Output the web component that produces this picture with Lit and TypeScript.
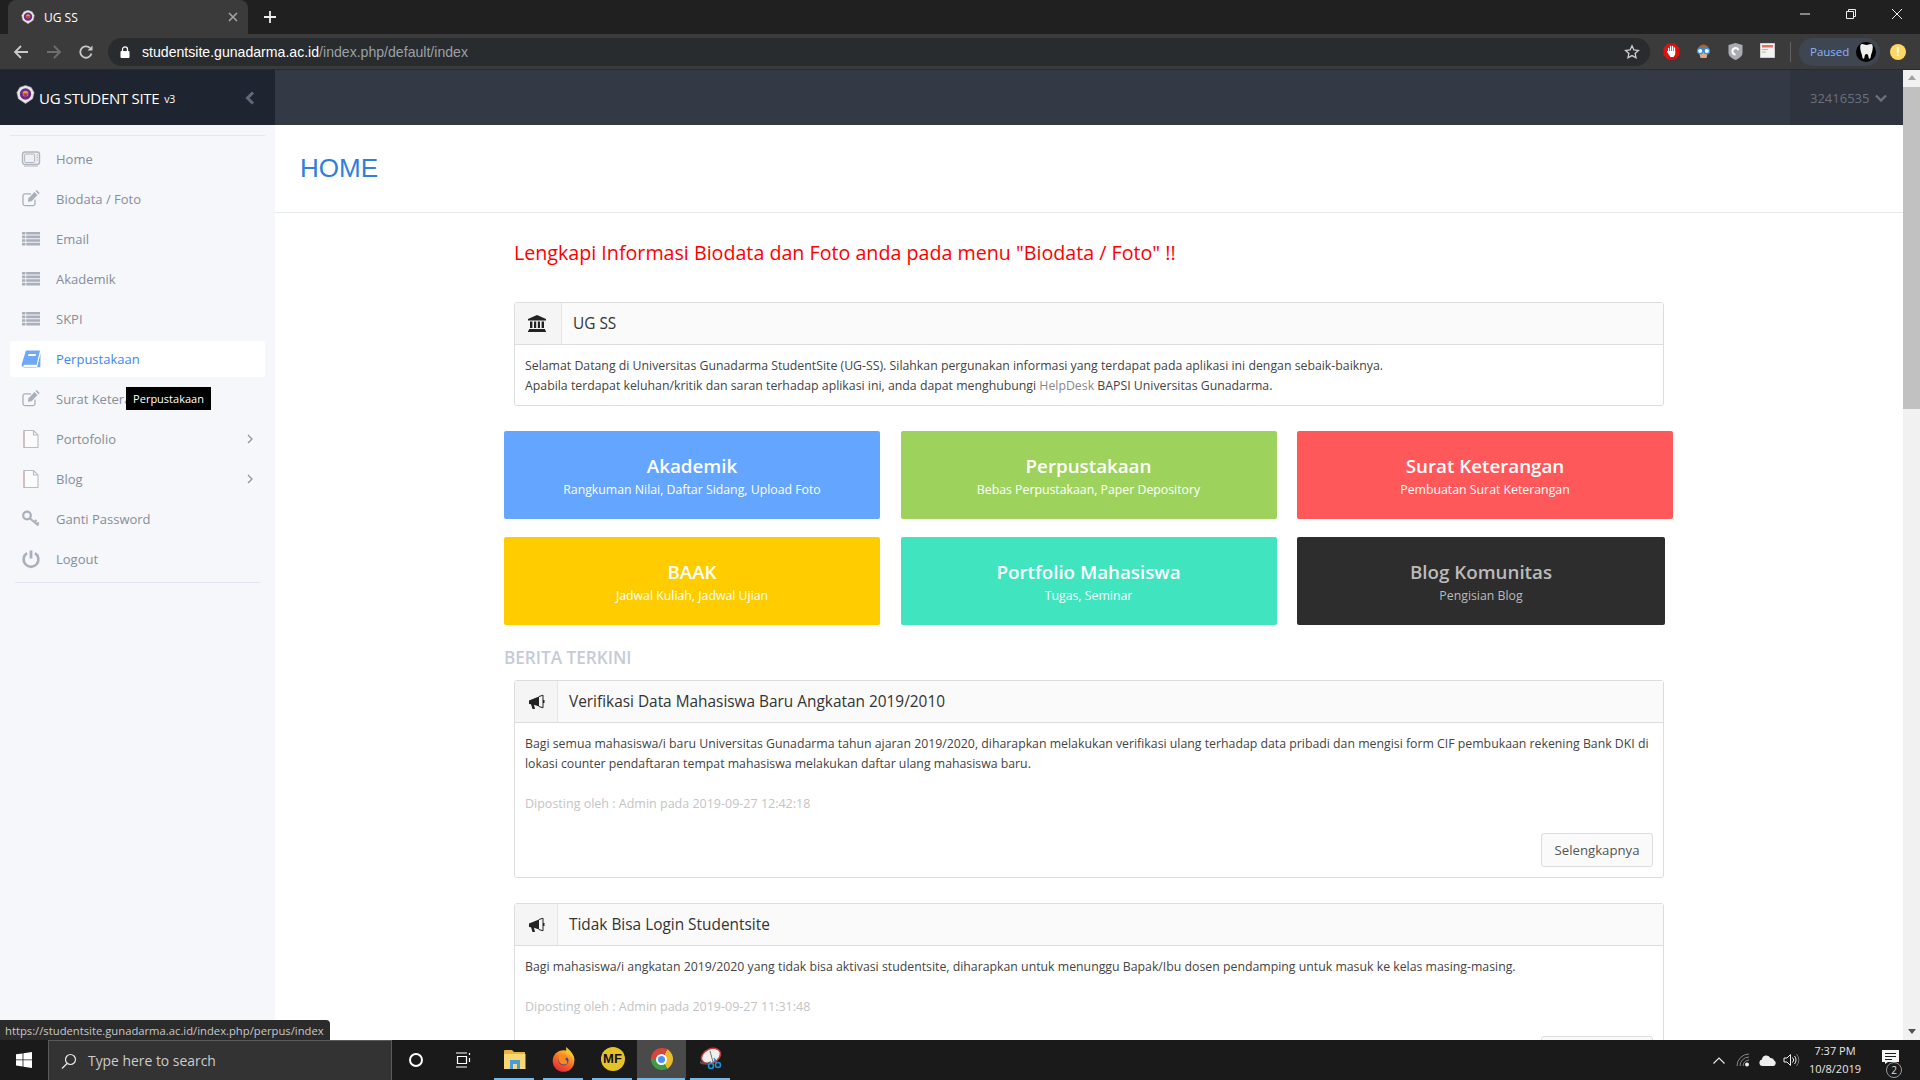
import { LitElement, html, css, svg } from "lit";
import { customElement } from "lit/decorators.js";

const logo = (size: number) => html`
    <svg class="logo" width="${size}" height="${size}" viewBox="0 0 20 20">
        <path d="M10 0.5L16 2.5 19 8 17.5 14.5 10 19.5 2.5 14.5 1 8 4 2.5Z" fill="#e9e6e8" stroke="#b9b4bc" stroke-width=".6"/>
        <circle cx="10" cy="9.5" r="6" fill="#6a2a8c"/>
        <circle cx="10" cy="9" r="3" fill="#d9a33c"/>
        <path d="M7 9h6l-3 4z" fill="#c2303a"/>
    </svg>`;

const icons: Record<string, unknown> = {
    tv: svg`<rect x="1.5" y="3" width="17" height="12.5" rx="2.5" fill="#eef0f3" stroke="#b0b5bf" stroke-width="1.4"/><rect x="3.6" y="5" width="10" height="8.5" rx="1" fill="none" stroke="#b0b5bf"/><path d="M15.5 6h1.5M15.5 8.5h1.5M15.5 11h1.5" stroke="#b0b5bf"/><path d="M3 17h14" stroke="#c5c9d0" stroke-width="1.4"/>`,
    edit: svg`<path d="M14 10.5v4.2a2 2 0 0 1-2 2H4a2 2 0 0 1-2-2V6.8a2 2 0 0 1 2-2h6" fill="none" stroke="#a9afbb" stroke-width="1.3"/><path d="M7.5 9.2l6-6.2 3 3-6 6.2-3.6.6z" fill="#a9afbb"/><path d="M14.5 2l1.2-1 3 3-1.2 1.2z" fill="#a9afbb"/>`,
    list: svg`<path d="M1 3h3.4v2.6H1zM5.2 3H19v2.6H5.2zM1 6.6h3.4v2.6H1zM5.2 6.6H19v2.6H5.2zM1 10.2h3.4v2.6H1zM5.2 10.2H19v2.6H5.2zM1 13.8h3.4v2.6H1zM5.2 13.8H19v2.6H5.2z" fill="#a9afbb"/>`,
    book: svg`<path d="M5 1.5h14l-3.4 14.2H3.6a1.6 1.6 0 0 0-.4 3H15.4l.9-.9 3.2-13.3-.2 13.8H3a2.4 2.4 0 0 1-2.3-3z" fill="#6ea8f7"/><path d="M7.5 5h7.5l-.5 2H7z" fill="#fff"/>`,
    file: svg`<path d="M3 1.5h9.5L17 6v12.5H3z" fill="#fbfbfc" stroke="#b9bcc4" stroke-width="1.1"/><path d="M12.5 1.5V6H17" fill="none" stroke="#b9bcc4" stroke-width="1.1"/><path d="M3 1.5v17" stroke="#c9a9a4" stroke-width="1"/>`,
    key: svg`<circle cx="6" cy="6.5" r="3.8" fill="none" stroke="#a9afbb" stroke-width="2.2"/><path d="M9 9.5l8.5 7M13.5 13l2-2M16 15l1.8-1.6" stroke="#a9afbb" stroke-width="2" fill="none"/>`,
    power: svg`<path d="M6 4.2a7.4 7.4 0 1 0 8 0" fill="none" stroke="#a9afbb" stroke-width="2.6"/><path d="M10 1.5v8" stroke="#a9afbb" stroke-width="2.8"/>`,
};

const menu = [
    { label: "Home", icon: "tv" },
    { label: "Biodata / Foto", icon: "edit" },
    { label: "Email", icon: "list" },
    { label: "Akademik", icon: "list" },
    { label: "SKPI", icon: "list" },
    { label: "Perpustakaan", icon: "book", active: true },
    { label: "Surat Keterangan", icon: "edit" },
    { label: "Portofolio", icon: "file", more: true },
    { label: "Blog", icon: "file", more: true },
    { label: "Ganti Password", icon: "key" },
    { label: "Logout", icon: "power" },
];

const tiles = [
    { title: "Akademik", sub: "Rangkuman Nilai, Daftar Sidang, Upload Foto", color: "#64a5ff" },
    { title: "Perpustakaan", sub: "Bebas Perpustakaan, Paper Depository", color: "#9dd35c" },
    { title: "Surat Keterangan", sub: "Pembuatan Surat Keterangan", color: "#ff585a" },
    { title: "BAAK", sub: "Jadwal Kuliah, Jadwal Ujian", color: "#ffcc00" },
    { title: "Portfolio Mahasiswa", sub: "Tugas, Seminar", color: "#40e5c0" },
    { title: "Blog Komunitas", sub: "Pengisian Blog", color: "#2d2d2d", dark: true },
];

const news = [
    {
        title: "Verifikasi Data Mahasiswa Baru Angkatan 2019/2010",
        body: html`Bagi semua mahasiswa/i baru Universitas Gunadarma tahun ajaran 2019/2020, diharapkan melakukan verifikasi ulang terhadap data pribadi dan mengisi form CIF pembukaan rekening Bank DKI di<br />lokasi counter pendaftaran tempat mahasiswa melakukan daftar ulang mahasiswa baru.`,
        meta: "Diposting oleh : Admin pada 2019-09-27 12:42:18",
    },
    {
        title: "Tidak Bisa Login Studentsite",
        body: html`Bagi mahasiswa/i angkatan 2019/2020 yang tidak bisa aktivasi studentsite, diharapkan untuk menunggu Bapak/Ibu dosen pendamping untuk masuk ke kelas masing-masing.`,
        meta: "Diposting oleh : Admin pada 2019-09-27 11:31:48",
    },
];

const bullhorn = html`<svg width="17" height="16" viewBox="0 0 17 16"><path d="M1 6.500L11 2.500v10L6 10.800 7 15H4.500L3 10.300 1 10z" fill="#222"/><path d="M11 2.500l4-1.300v12.600L11 12.500" fill="none" stroke="#222" stroke-width="1"/><path d="M15 6h1.500v3H15z" fill="#222"/></svg>`;
const bank = html`<svg width="18" height="17" viewBox="0 0 18 17"><path d="M9 0l9 4v1.400H0V4zM1 14h16v1.400H1zM0 15.400h18V17H0zM2 6.400h2.400V13H2zM6 6.400h2.200V13H6zM9.800 6.400H12V13H9.800zM13.600 6.400H16V13h-2.400z" fill="#222"/></svg>`;

@customElement("app-root")
export class AppRoot extends LitElement {
    static override styles = css`
        :host {
            display: flex;
            flex-direction: column;
            width: 1920px;
            height: 1080px;
            overflow: hidden;
            font-family: "Open Sans", sans-serif;
            background: #fff;
        }

        .tabstrip {
            flex: 0 0 34px;
            display: flex;
            align-items: flex-end;
            background: #202020;
            padding-left: 8px;
        }
        .tab {
            width: 240px;
            height: 34px;
            box-sizing: border-box;
            padding: 0 10px 0 13px;
            display: flex;
            align-items: center;
            gap: 9px;
            background: #3b3b3b;
            border-radius: 8px 8px 0 0;
            color: #fff;
            font-size: 12px;
        }
        .tab span { flex: 1; }
        .new-tab { margin-left: 16px; align-self: center; display: flex; }
        .win { margin-left: auto; align-self: stretch; display: flex; }
        .win div { width: 46px; display: flex; align-items: center; justify-content: center; margin-top: -6px; }

        .toolbar {
            flex: 0 0 36px;
            box-sizing: border-box;
            display: flex;
            align-items: center;
            background: #3b3b3b;
            border-bottom: 1px solid #2a2a2a;
            padding: 0 10px 0 13px;
        }
        .nav { width: 32.500px; display: flex; }
        .omni {
            flex: 0 0 1542px;
            margin-left: -2.500px;
            height: 28px;
            box-sizing: border-box;
            display: flex;
            align-items: center;
            gap: 12px;
            padding: 0 10px 0 12px;
            border-radius: 14px;
            background: #282c2e;
            color: #fff;
            font-family: "Liberation Sans", sans-serif;
            font-size: 14.100px;
        }
        .omni em { font-style: normal; color: #9aa0a6; }
        .omni .star { margin-left: auto; display: flex; }
        .ext { display: flex; width: 32px; justify-content: center; }
        .exts { display: flex; margin-left: 5px; }
        .sep { width: 1px; height: 20px; background: #5f6368; margin: 0 8px 0 7px; }
        .paused {
            width: 81px;
            height: 28px;
            box-sizing: border-box;
            display: flex;
            align-items: center;
            justify-content: space-between;
            padding: 0 4px 0 11px;
            border-radius: 14px;
            background: #3e4652;
            color: #8ab4f8;
            font-size: 11.500px;
        }
        .avatar {
            width: 20px;
            height: 20px;
            border-radius: 50%;
            background: #000;
            display: flex;
            align-items: center;
            justify-content: center;
        }
        .alert {
            margin-left: 10px;
            width: 16px;
            height: 16px;
            border-radius: 50%;
            background: #fdd663;
            color: #fff;
            font: bold 12px/16px "Liberation Sans", sans-serif;
            text-align: center;
        }

        .page { flex: 1; min-height: 0; display: flex; position: relative; }

        .sidebar { flex: 0 0 275px; background: #f5f7fa; position: relative; }
        .brand {
            height: 55px;
            box-sizing: border-box;
            display: flex;
            align-items: center;
            padding: 0 20px 0 16px;
            background: #1f2530;
            color: #fff;
            font-size: 15px;
            letter-spacing: -0.3px;
        }
        .brand .logo { margin: -6px 4px 0 0; }
        .brand small { font-size: 10.500px; margin: 2px 0 0 5px; }
        .brand .collapse { margin-left: auto; display: flex; }
        .rule { height: 1px; background: #e4e8f0; }
        .rule.top { margin: 10px 10px 5px; }
        .rule.bottom { margin: 5px 15px 0; background: #dfe6f0; }
        .menu { display: flex; flex-direction: column; gap: 4px; }
        .item {
            height: 36px;
            margin: 0 10px;
            box-sizing: border-box;
            padding: 0 12px 0 11px;
            display: flex;
            align-items: center;
            border-radius: 3px;
            color: #878d9b;
            font-size: 13px;
            white-space: nowrap;
        }
        .item svg.ic { flex: 0 0 20px; margin-right: 15px; }
        .item.active { background: #fff; color: #3f86f5; }
        .item .more { margin-left: auto; display: flex; margin-right: 0; }
        .tooltip {
            position: absolute;
            left: 126px;
            top: 317px;
            width: 85px;
            height: 23px;
            box-sizing: border-box;
            background: #000;
            color: #fff;
            font-size: 11px;
            line-height: 23px;
            text-align: center;
        }

        .main { flex: 1; min-width: 0; overflow: hidden; }
        .topbar { height: 55px; display: flex; justify-content: flex-end; background: #343a45; }
        .user {
            width: 113px;
            box-sizing: border-box;
            display: flex;
            align-items: center;
            gap: 6px;
            padding-left: 20px;
            background: #2e333e;
            color: #6a707d;
            font-size: 13px;
        }
        .title {
            height: 88px;
            box-sizing: border-box;
            padding-left: 25px;
            display: flex;
            align-items: center;
            border-bottom: 1px solid #e6e9ee;
            color: #2f80dc;
            font-family: "Liberation Sans", sans-serif;
            font-size: 26px;
        }
        .content { padding: 26px 0 0 229px; }
        .warn {
            margin: 0 0 35px 10px;
            color: #f00;
            font-size: 19.660px;
            line-height: 28px;
            font-weight: 500;
        }
        .panel {
            width: 1150px;
            margin-left: 10px;
            box-sizing: border-box;
            border: 1px solid #ddd;
            border-radius: 3px;
            color: #444;
            font-size: 12.300px;
            line-height: 20px;
        }
        .panel-head {
            height: 42px;
            box-sizing: border-box;
            display: flex;
            align-items: center;
            background: #fafafa;
            border-bottom: 1px solid #ddd;
            color: #333;
            font-size: 15.400px;
        }
        .panel-icon {
            align-self: stretch;
            display: flex;
            align-items: center;
            padding: 0 12px 0 13px;
            margin-right: 11px;
            background: #f5f5f5;
            border-right: 1px solid #e6e6e6;
        }
        .panel-body { padding: 11px 10px 10px; }
        .welcome .panel-body { padding: 11px 10px 9px; }
        .welcome .panel-icon { padding-right: 15px; }
        .helpdesk { color: #888; }
        .meta { margin-top: 20px; color: #c4c4c4; font-size: 12.500px; }
        .actions { display: flex; justify-content: flex-end; margin-top: 19px; }
        .btn {
            height: 34px;
            width: 112px;
            box-sizing: border-box;
            border: 1px solid #ddd;
            border-radius: 3px;
            background: #fafafa;
            color: #555;
            font-size: 13.200px;
            line-height: 32px;
            text-align: center;
        }
        .tiles {
            display: grid;
            grid-template-columns: repeat(3, 376px);
            column-gap: 20.500px;
            row-gap: 18px;
            margin-top: 25px;
        }
        .tile {
            height: 88px;
            box-sizing: border-box;
            padding-top: 22px;
            border-radius: 2px;
            color: #fff;
            text-align: center;
        }
        .tile b { display: block; font-size: 18.750px; font-weight: 600; line-height: 26px; }
        .tile span { display: block; margin-top: 1px; font-size: 12.300px; line-height: 20px; }
        .tile.dark { width: 368px; color: #bbb; }
        .news-head {
            margin: 21px 0 10px;
            color: #c5cbd8;
            font-size: 17.150px;
            font-weight: 600;
            line-height: 24px;
        }
        .panel + .panel { margin-top: 25px; }

        .scrollbar {
            flex: 0 0 17px;
            display: flex;
            flex-direction: column;
            align-items: center;
            background: #f1f1f1;
        }
        .scrollbar i { display: block; width: 0; height: 0; border: 4px solid transparent; margin: 5px 0 0; }
        .scrollbar .up { border-top: 0; border-bottom: 5px solid #a3a3a3; }
        .scrollbar .down { border-bottom: 0; border-top: 5px solid #505050; margin: auto 0 6px; }
        .scrollbar .thumb { width: 100%; height: 322px; margin-top: 7px; background: #c1c1c1; }

        .status {
            position: absolute;
            left: 0;
            bottom: 0;
            height: 20px;
            width: 330px;
            box-sizing: border-box;
            padding-left: 5px;
            background: #2b2b2b;
            border-radius: 0 4px 0 0;
            color: #c8c8c8;
            font-size: 11.260px;
            line-height: 21px;
        }

        .taskbar {
            flex: 0 0 40px;
            display: flex;
            align-items: stretch;
            background: #1a1a1a;
            color: #fff;
        }
        .start { width: 48px; display: flex; align-items: center; justify-content: center; }
        .search {
            width: 344px;
            box-sizing: border-box;
            display: flex;
            align-items: center;
            gap: 11px;
            padding-left: 12px;
            background: #333;
            border: 1px solid #5a5a5a;
            border-bottom: 0;
            color: #ccc;
            font-size: 13.900px;
        }
        .tb { display: flex; align-items: center; justify-content: center; width: 47px; }
        .tb.spacer { width: 4px; }
        .app {
            width: 49px;
            display: flex;
            align-items: center;
            justify-content: center;
            box-sizing: border-box;
            border-bottom: 2px solid transparent;
            background-clip: padding-box;
            position: relative;
        }
        .app::after {
            content: "";
            position: absolute;
            left: 4px;
            right: 5px;
            bottom: -2px;
            height: 2px;
            background: #76b9ed;
        }
        .app.focus { background-color: #4a4a4a; }
        .app.focus::after { left: 0; right: 1px; }
        .mf {
            width: 24px;
            height: 24px;
            border-radius: 50%;
            background: #e6c229;
            color: #111;
            font: bold 13px/24px "Liberation Sans", sans-serif;
            text-align: center;
        }
        .chrome-ic {
            width: 22px;
            height: 22px;
            border-radius: 50%;
            background: conic-gradient(from 30deg, #e9bb2a 0 120deg, #3f9c45 120deg 240deg, #d8443a 240deg 360deg);
            display: flex;
            align-items: center;
            justify-content: center;
        }
        .chrome-ic i { width: 7px; height: 7px; border-radius: 50%; background: #4f8ff0; border: 2px solid #fff; }
        .tray { margin-left: auto; display: flex; align-items: center; }
        .tray .t { width: 24px; display: flex; justify-content: center; }
        .clock { width: 64px; text-align: center; font-size: 11px; line-height: 18px; color: #e6e6e6; }
        .notif { width: 46px; margin-right: 7px; display: flex; justify-content: center; position: relative; }
        .notif svg { margin-top: -6px; }
        .notif span {
            position: absolute;
            left: 19px;
            top: 6px;
            width: 16px;
            height: 16px;
            box-sizing: border-box;
            border-radius: 50%;
            border: 1px solid #999;
            background: #1a1a1a;
            color: #ddd;
            font-size: 10px;
            line-height: 14px;
            text-align: center;
        }
    `;

    private renderTabstrip () {
        return html`
            <div class="tabstrip">
                <div class="tab">
                    ${logo(14)}
                    <span>UG SS</span>
                    <svg width="10" height="10" viewBox="0 0 10 10"><path d="M1 1l8 8M9 1l-8 8" stroke="#a5a5a5" stroke-width="1.6"/></svg>
                </div>
                <div class="new-tab"><svg width="12" height="12" viewBox="0 0 12 12"><path d="M6 0v12M0 6h12" stroke="#eee" stroke-width="1.8"/></svg></div>
                <div class="win">
                    <div><svg width="12" height="12" viewBox="0 0 12 12"><path d="M1 6h10" stroke="#eee"/></svg></div>
                    <div><svg width="12" height="12" viewBox="0 0 12 12"><path d="M1.500 3.500h7v7h-7zM3.500 3.500v-2h7v7h-2" fill="none" stroke="#eee"/></svg></div>
                    <div><svg width="12" height="12" viewBox="0 0 12 12"><path d="M1 1l10 10M11 1L1 11" stroke="#eee"/></svg></div>
                </div>
            </div>
        `;
    }

    private renderToolbar () {
        return html`
            <div class="toolbar">
                <div class="nav"><svg width="16" height="16" viewBox="0 0 16 16"><path d="M15 8H2M8 2L2 8l6 6" fill="none" stroke="#c9c9c9" stroke-width="1.8"/></svg></div>
                <div class="nav"><svg width="16" height="16" viewBox="0 0 16 16"><path d="M1 8h13M8 2l6 6-6 6" fill="none" stroke="#6e6e6e" stroke-width="1.8"/></svg></div>
                <div class="nav"><svg width="16" height="16" viewBox="0 0 16 16"><path d="M13.500 9.500A5.700 5.700 0 1 1 12 4" fill="none" stroke="#c9c9c9" stroke-width="1.8"/><path d="M14.500 1.500v5h-5z" fill="#c9c9c9"/></svg></div>
                <div class="omni">
                    <svg width="10" height="12" viewBox="0 0 10 12"><path d="M2.500 5V3.400a2.500 2.500 0 0 1 5 0V5" fill="none" stroke="#fff" stroke-width="1.3"/><rect x=".5" y="5" width="9" height="7" rx="1" fill="#fff"/></svg>
                    <span>studentsite.gunadarma.ac.id<em>/index.php/default/index</em></span>
                    <span class="star"><svg width="16" height="16" viewBox="0 0 16 16"><path d="M8 1.800l1.900 4.100 4.500.5-3.300 3 .9 4.400L8 11.600l-4 2.200.9-4.400-3.300-3 4.500-.5z" fill="none" stroke="#d0d0d0" stroke-width="1.3"/></svg></span>
                </div>
                <div class="exts">
                    <div class="ext"><svg width="17" height="17" viewBox="0 0 17 17"><path d="M5 .5h7L16.500 5v7L12 16.500H5L.5 12V5z" fill="#e30f0f"/><path d="M5.600 9V5.500M7.600 8V3.500M9.600 8V3.500M11.500 9V5" stroke="#fff" stroke-width="1.300" stroke-linecap="round" fill="none"/><path d="M5 8h7.200v3.500L10.500 14H7.500L5 10.500 3.800 8.500l.6-.6z" fill="#fff"/></svg></div>
                    <div class="ext"><svg width="17" height="17" viewBox="0 0 17 17"><circle cx="8.500" cy="7" r="5.500" fill="#a5683a"/><path d="M4 9h9l-1.500 6h-6z" fill="#e8a878"/><circle cx="5.200" cy="8" r="2.700" fill="#fff" stroke="#2e8fe8" stroke-width="1.300"/><circle cx="11.800" cy="8" r="2.700" fill="#fff" stroke="#2e8fe8" stroke-width="1.300"/></svg></div>
                    <div class="ext"><svg width="15" height="17" viewBox="0 0 15 17"><path d="M.5 2L7.500 0l7 2v8c0 3-3.500 5.500-7 7-3.500-1.500-7-4-7-7z" fill="#a9adb3"/><path d="M10.500 7a3.200 3.200 0 1 0-3 4.500" fill="none" stroke="#fff" stroke-width="2"/></svg></div>
                    <div class="ext"><svg width="15" height="15" viewBox="0 0 15 15"><rect width="15" height="15" fill="#f2f2f2" stroke="#aaa"/><path d="M2 2h11v2.500H2z" fill="#ef6b5b"/><path d="M2 6.500h6M2 9h4" stroke="#9fd356" stroke-width="1.200"/></svg></div>
                </div>
                <div class="sep"></div>
                <div class="paused">
                    Paused
                    <span class="avatar"><svg width="13" height="15" viewBox="0 0 13 15"><path d="M2 0c2 0 3 1 4.500 1S9 0 11 0s2 3 1.500 6-1.500 4-1.800 7c-.2 2-2 2.500-2.200 0-.1-1.500-.5-3-2-3s-1.900 1.500-2 3c-.2 2.500-2 2-2.200 0C2 10 1 9 .5 6S0 0 2 0z" fill="#eee"/></svg></span>
                </div>
                <div class="alert">!</div>
            </div>
        `;
    }

    private renderSidebar () {
        return html`
            <aside class="sidebar">
                <div class="brand">
                    ${logo(19)}
                    UG STUDENT SITE<small>v3</small>
                    <span class="collapse"><svg width="10" height="14" viewBox="0 0 10 14"><path d="M8 1.500L2.500 7 8 12.500" fill="none" stroke="#5f6a7c" stroke-width="3"/></svg></span>
                </div>
                <div class="rule top"></div>
                <div class="menu">
                    ${menu.map((m) => html`
                        <div class="item ${m.active ? "active" : ""}">
                            <svg class="ic" width="20" height="20" viewBox="0 0 20 20">${icons[m.icon]}</svg>
                            ${m.label}
                            ${m.more ? html`<span class="more"><svg width="6" height="10" viewBox="0 0 6 10"><path d="M1 1l4 4-4 4" fill="none" stroke="#8a909c" stroke-width="1.200"/></svg></span>` : ""}
                        </div>
                    `)}
                </div>
                <div class="rule bottom"></div>
                <div class="tooltip">Perpustakaan</div>
            </aside>
        `;
    }

    private renderContent () {
        return html`
            <div class="content">
                <p class="warn">Lengkapi Informasi Biodata dan Foto anda pada menu "Biodata / Foto" !!</p>
                <div class="panel welcome">
                    <div class="panel-head"><span class="panel-icon">${bank}</span>UG SS</div>
                    <div class="panel-body">
                        Selamat Datang di Universitas Gunadarma StudentSite (UG-SS). Silahkan pergunakan informasi yang terdapat pada aplikasi ini dengan sebaik-baiknya.<br />
                        Apabila terdapat keluhan/kritik dan saran terhadap aplikasi ini, anda dapat menghubungi <span class="helpdesk">HelpDesk</span> BAPSI Universitas Gunadarma.
                    </div>
                </div>
                <div class="tiles">
                    ${tiles.map((t) => html`
                        <div class="tile ${t.dark ? "dark" : ""}" style="background:${t.color}">
                            <b>${t.title}</b>
                            <span>${t.sub}</span>
                        </div>
                    `)}
                </div>
                <div class="news-head">BERITA TERKINI</div>
                ${news.map((n) => html`
                    <div class="panel">
                        <div class="panel-head"><span class="panel-icon">${bullhorn}</span>${n.title}</div>
                        <div class="panel-body">
                            ${n.body}
                            <div class="meta">${n.meta}</div>
                            <div class="actions"><div class="btn">Selengkapnya</div></div>
                        </div>
                    </div>
                `)}
            </div>
        `;
    }

    private renderTaskbar () {
        return html`
            <footer class="taskbar">
                <div class="start"><svg width="16" height="16" viewBox="0 0 16 16"><path d="M0 2.300L6.600 1.400V7.500H0zM7.400 1.300L16 0V7.500H7.400zM0 8.300H6.600V14.500L0 13.600zM7.400 8.300H16V16L7.400 14.700z" fill="#fff"/></svg></div>
                <div class="search">
                    <svg width="16" height="16" viewBox="0 0 16 16"><circle cx="9.500" cy="6.500" r="5" fill="none" stroke="#e8e8e8" stroke-width="1.200"/><path d="M6 10.500L1 15.500" stroke="#e8e8e8" stroke-width="1.200"/></svg>
                    Type here to search
                </div>
                <div class="tb"><svg width="16" height="16" viewBox="0 0 16 16"><circle cx="8" cy="8" r="6" fill="none" stroke="#fff" stroke-width="2"/></svg></div>
                <div class="tb"><svg width="16" height="16" viewBox="0 0 16 16"><path d="M1 1h11M1 15h11M2.500 4.500h9v7h-9zM14.500 1v2M14.500 6v4" fill="none" stroke="#fff" stroke-width="1.200"/></svg></div>
                <div class="tb spacer"></div>
                <div class="app"><svg width="22" height="20" viewBox="0 0 22 20"><path d="M0 2a1 1 0 0 1 1-1h7l2 2h11v16H0z" fill="#e8b53c"/><path d="M0 5h21.500v15H0z" fill="#f9d774"/><path d="M6 11h10v9h-3v-5H9v5H6z" fill="#4a9bdc"/></svg></div>
                <div class="app"><svg width="23" height="25" viewBox="0 0 23 25"><defs><linearGradient id="fx" x1="0.800" y1="0" x2="0.200" y2="1"><stop offset="0" stop-color="#ffd22e"/><stop offset=".45" stop-color="#f7761f"/><stop offset="1" stop-color="#e0213f"/></linearGradient></defs><circle cx="11.500" cy="14" r="10.800" fill="url(#fx)"/><path d="M14 0c5 4 8.500 8 8.500 14-2-5-4-6-8-7z" fill="#ffc32a"/><circle cx="11.500" cy="13.500" r="5" fill="#5a3aa8"/><path d="M7 9c3-2.500 8-1.500 9 2-2-.8-3.500.6-2 2 1 .8 1.800 2 1 3.500-3 2-7 1-8-2.500-.4-1.800-.4-3.500 0-5z" fill="#f58a1f"/></svg></div>
                <div class="app"><div class="mf">MF</div></div>
                <div class="app focus"><div class="chrome-ic"><i></i></div></div>
                <div class="app"><svg width="24" height="24" viewBox="0 0 24 24"><ellipse cx="12" cy="9" rx="10" ry="7" transform="rotate(-25 12 9)" fill="#f1eeee" stroke="#c9383c" stroke-width="1.500"/><path d="M1 14c4 3 8 2 11 0l-1 3c-4 1-8 1-10-1z" fill="#555"/><path d="M11 4l3 11" stroke="#777"/><circle cx="12" cy="19" r="2.500" fill="none" stroke="#1f8fd6" stroke-width="1.600"/><circle cx="19" cy="18" r="2.500" fill="none" stroke="#1f8fd6" stroke-width="1.600"/><path d="M13.500 17l3-5M17.500 16l-2.500-5" stroke="#1f8fd6" stroke-width="1.300"/></svg></div>
                <div class="tray">
                    <div class="t"><svg width="12" height="7" viewBox="0 0 12 7"><path d="M.5 6.500L6 1l5.500 5.500" fill="none" stroke="#eee" stroke-width="1.100"/></svg></div>
                    <div class="t"><svg width="14" height="14" viewBox="0 0 14 14"><path d="M1 13A12 12 0 0 1 13 1M4 13a9 9 0 0 1 9-9M7 13a6 6 0 0 1 6-6" fill="none" stroke="#888" stroke-width="1"/><circle cx="11" cy="11.500" r="2" fill="#eee"/></svg></div>
                    <div class="t"><svg width="17" height="11" viewBox="0 0 17 11"><path d="M3.500 11a3.300 3.300 0 0 1-.6-6.500 4.500 4.500 0 0 1 8.500-1.500 3.500 3.500 0 0 1 3.800 2.500A3 3 0 0 1 14.500 11z" fill="#eee"/></svg></div>
                    <div class="t"><svg width="17" height="14" viewBox="0 0 17 14"><path d="M1 5h3l3.500-3.500v11L4 9H1z" fill="none" stroke="#eee"/><path d="M9.500 4.500a3.500 3.500 0 0 1 0 5M11.500 3a6 6 0 0 1 0 8" fill="none" stroke="#eee"/><path d="M13.500 1a9 9 0 0 1 0 12" fill="none" stroke="#777"/></svg></div>
                    <div class="clock">7:37 PM<br />10/8/2019</div>
                    <div class="notif">
                        <svg width="17" height="14" viewBox="0 0 17 14"><path d="M0 0h17v12H6l-3 2v-2H0z" fill="#f5f5f5"/><path d="M3 3.500h11M3 6.500h11M3 9.500h7" stroke="#1a1a1a"/></svg>
                        <span>2</span>
                    </div>
                </div>
            </footer>
        `;
    }

    override render () {
        return html`
            ${this.renderTabstrip()}
            ${this.renderToolbar()}
            <div class="page">
                ${this.renderSidebar()}
                <main class="main">
                    <div class="topbar">
                        <div class="user">
                            32416535
                            <svg width="12" height="8" viewBox="0 0 12 8"><path d="M1 1.500l5 5 5-5" fill="none" stroke="#6a707d" stroke-width="2.400"/></svg>
                        </div>
                    </div>
                    <div class="title">HOME</div>
                    ${this.renderContent()}
                </main>
                <div class="scrollbar">
                    <i class="up"></i>
                    <div class="thumb"></div>
                    <i class="down"></i>
                </div>
                <div class="status">https://studentsite.gunadarma.ac.id/index.php/perpus/index</div>
            </div>
            ${this.renderTaskbar()}
        `;
    }
}
